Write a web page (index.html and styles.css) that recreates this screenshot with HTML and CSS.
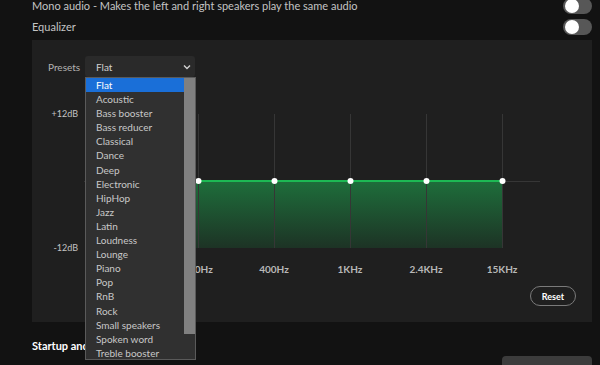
FILE: index.html
```html
<!DOCTYPE html>
<html lang="en">
<head>
    <meta charset="UTF-8">
    <meta name="viewport" content="width=device-width, initial-scale=1.0">
    <title>Settings - Playback</title>
    <link rel="stylesheet" href="styles.css">
</head>
<body>
    <div class="page">
        <div class="setting-row">
            <span>Mono audio - Makes the left and right speakers play the same audio</span>
            <div class="toggle"><div class="knob"></div></div>
        </div>
        <div class="setting-row">
            <span>Equalizer</span>
            <div class="toggle"><div class="knob"></div></div>
        </div>

        <div class="eq-panel">
            <div class="presets">
                <span class="presets-label">Presets</span>
                <div class="select">
                    <span>Flat</span>
                    <svg class="chevron" width="8" height="6" viewBox="0 0 8 6">
                        <path d="M1 1.5 L4 4.5 L7 1.5" fill="none" stroke="#d0d0d0" stroke-width="1.4"/>
                    </svg>
                </div>
            </div>

            <div class="chart-row">
                <div class="db-labels">
                    <span>+12dB</span>
                    <span>-12dB</span>
                </div>
                <svg class="chart" width="456" height="134" viewBox="0 0 456 134">
                    <defs>
                        <linearGradient id="fill" x1="0" y1="0" x2="0" y2="1">
                            <stop offset="0" stop-color="#1e6e3b"/>
                            <stop offset="1" stop-color="#1d3325"/>
                        </linearGradient>
                    </defs>
                    <rect x="38" y="67" width="380" height="67" fill="url(#fill)"/>
                    <g stroke="#363636" stroke-width="1">
                        <line x1="38.5" y1="0" x2="38.5" y2="134"/>
                        <line x1="114.5" y1="0" x2="114.5" y2="134"/>
                        <line x1="190.5" y1="0" x2="190.5" y2="134"/>
                        <line x1="266.5" y1="0" x2="266.5" y2="134"/>
                        <line x1="342.5" y1="0" x2="342.5" y2="134"/>
                        <line x1="418.5" y1="0" x2="418.5" y2="134"/>
                        <line x1="0" y1="67.5" x2="456" y2="67.5"/>
                    </g>
                    <line x1="38" y1="67" x2="418" y2="67" stroke="#1db954" stroke-width="2"/>
                    <g fill="#ffffff">
                        <circle cx="38.5" cy="67" r="3"/>
                        <circle cx="114.5" cy="67" r="3"/>
                        <circle cx="190.5" cy="67" r="3"/>
                        <circle cx="266.5" cy="67" r="3"/>
                        <circle cx="342.5" cy="67" r="3"/>
                        <circle cx="418.5" cy="67" r="3"/>
                    </g>
                </svg>
            </div>

            <div class="freq-labels">
                <span>60Hz</span>
                <span>150Hz</span>
                <span>400Hz</span>
                <span>1KHz</span>
                <span>2.4KHz</span>
                <span>15KHz</span>
            </div>

            <div class="reset-row">
                <button class="reset">Reset</button>
            </div>

            <div class="dropdown">
                <div class="options">
                    <div class="option selected">Flat</div>
                    <div class="option">Acoustic</div>
                    <div class="option">Bass booster</div>
                    <div class="option">Bass reducer</div>
                    <div class="option">Classical</div>
                    <div class="option">Dance</div>
                    <div class="option">Deep</div>
                    <div class="option">Electronic</div>
                    <div class="option">HipHop</div>
                    <div class="option">Jazz</div>
                    <div class="option">Latin</div>
                    <div class="option">Loudness</div>
                    <div class="option">Lounge</div>
                    <div class="option">Piano</div>
                    <div class="option">Pop</div>
                    <div class="option">RnB</div>
                    <div class="option">Rock</div>
                    <div class="option">Small speakers</div>
                    <div class="option">Spoken word</div>
                    <div class="option">Treble booster</div>
                </div>
                <div class="scrollbar"><div class="thumb"></div></div>
            </div>
        </div>

        <div class="section-row">
            <h2>Startup and window behaviour</h2>
        </div>
        <div class="bottom-button"></div>
    </div>
</body>
</html>
```

FILE: styles.css
```css
* {
    margin: 0;
    padding: 0;
    box-sizing: border-box;
}

body {
    font-family: Lato, 'Noto Sans', sans-serif;
    background: #121212;
    color: #b3b3b3;
    width: 600px;
    height: 365px;
    overflow: hidden;
}

.page {
    padding: 0 8px 0 32px;
    margin-top: -5px;
}

.setting-row {
    display: flex;
    justify-content: space-between;
    align-items: center;
    height: 21px;
    font-size: 11px;
    color: #c4c4c4;
}

.toggle {
    width: 29px;
    height: 16px;
    border-radius: 8px;
    background: #575757;
    padding: 1px 2px;
}

.knob {
    width: 14px;
    height: 14px;
    border-radius: 50%;
    background: #ffffff;
}

.eq-panel {
    position: relative;
    margin-top: 3px;
    background: #1f1f1f;
    padding: 16px 16px 16px 16px;
}

.presets {
    display: flex;
    align-items: center;
    height: 21px;
}

.presets-label {
    width: 37px;
    font-size: 10px;
    color: #b3b3b3;
}

.select {
    width: 110px;
    height: 21px;
    background: #2a2a2a;
    border-radius: 3px;
    display: flex;
    align-items: center;
    justify-content: space-between;
    padding: 0 4px 0 11px;
    font-size: 10px;
    color: #d0d0d0;
}

.chart-row {
    display: flex;
    margin-top: 37px;
}

.db-labels {
    width: 36px;
    height: 146px;
    margin-top: -6px;
    padding-right: 6px;
    display: flex;
    flex-direction: column;
    justify-content: space-between;
    align-items: flex-end;
    font-size: 9px;
    line-height: 12px;
    color: #c4c4c4;
}

.chart {
    display: block;
}

.freq-labels {
    display: flex;
    margin: 9px 0 0 36px;
    font-size: 10px;
    font-weight: 700;
    line-height: 12px;
    color: #b8b8b8;
}

.freq-labels span {
    width: 76px;
    text-align: center;
}

.reset-row {
    display: flex;
    justify-content: flex-end;
    margin-top: 11px;
}

.reset {
    height: 20px;
    width: 46px;
    border: 1px solid #7a7a7a;
    border-radius: 10px;
    background: transparent;
    color: #ffffff;
    font-family: Lato, 'Noto Sans', sans-serif;
    font-size: 9px;
    font-weight: 700;
}

.dropdown {
    position: absolute;
    top: 37px;
    left: 53px;
    width: 111px;
    height: 283px;
    background: #303030;
    border: 1px solid #5a5a5a;
    display: flex;
    z-index: 5;
}

.options {
    flex: 1;
}

.option {
    height: 14.1px;
    line-height: 14px;
    padding-left: 10px;
    font-size: 10px;
    color: #c8c8c8;
    white-space: nowrap;
}

.option.selected {
    background: #1a6fd8;
    color: #ffffff;
}

.scrollbar {
    width: 11px;
}

.thumb {
    height: 256px;
    background: #808080;
}

.section-row {
    margin-top: 17px;
}

.section-row h2 {
    font-size: 11px;
    font-weight: 700;
    color: #ffffff;
    line-height: 14px;
}

.bottom-button {
    width: 90px;
    height: 20px;
    margin: 3px 0 0 auto;
    border-radius: 4px;
    background: #3c3c3c;
}
```
